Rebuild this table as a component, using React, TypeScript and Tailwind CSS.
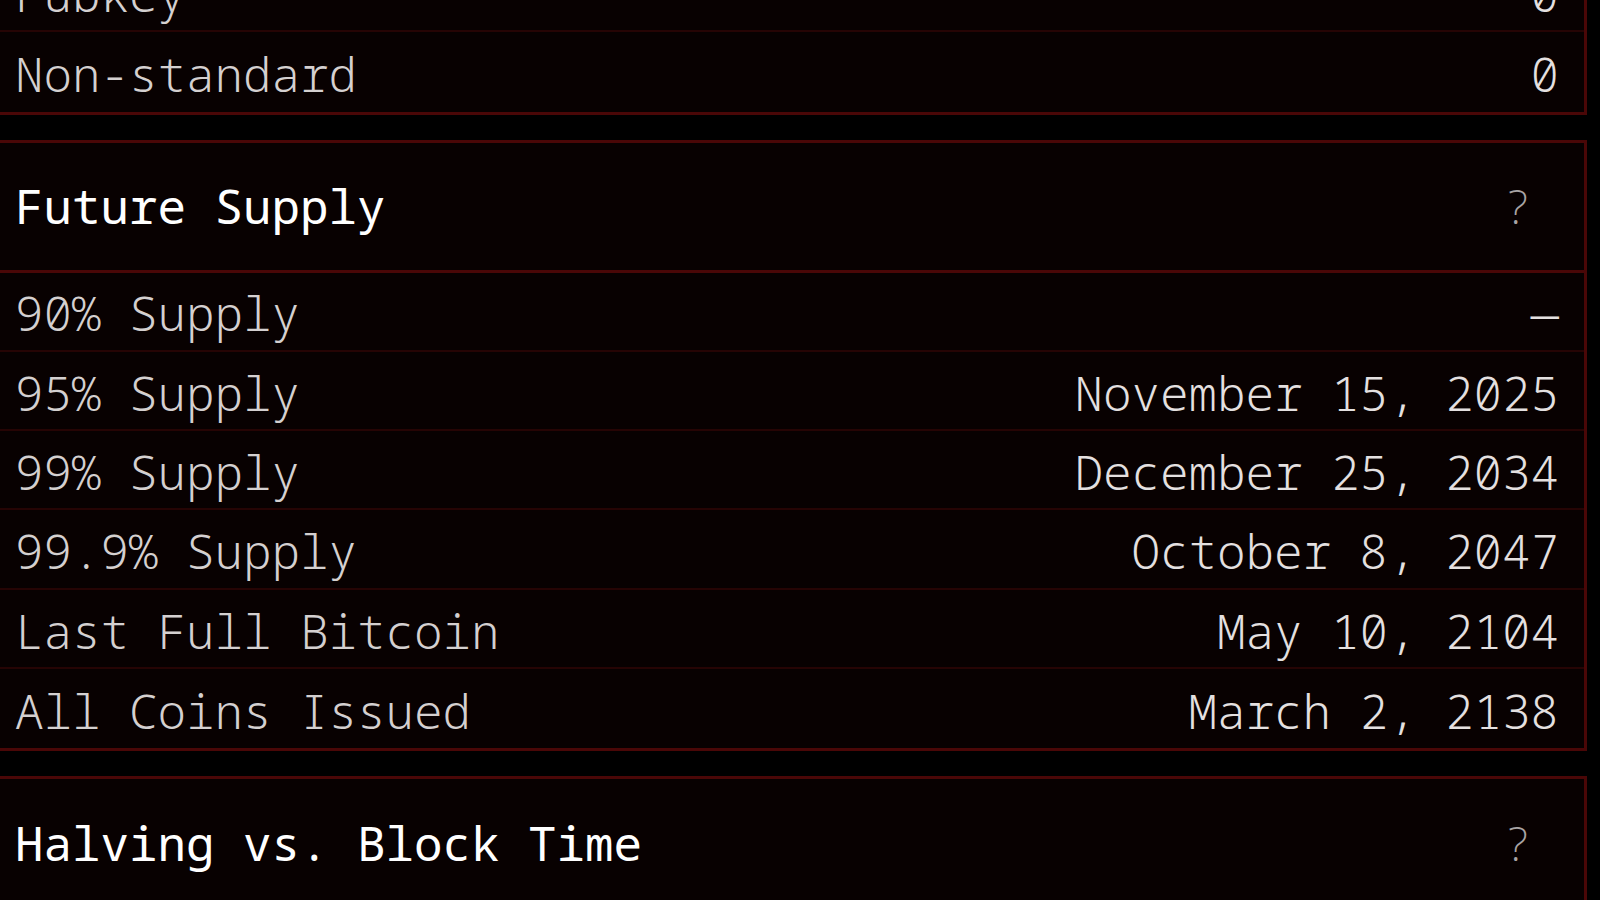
type Row = { label: string; value: string };

const outputRows: Row[] = [
  { label: "Pubkey", value: "0" },
  { label: "Non-standard", value: "0" },
];

const futureRows: Row[] = [
  { label: "90% Supply", value: "—" },
  { label: "95% Supply", value: "November 15, 2025" },
  { label: "99% Supply", value: "December 25, 2034" },
  { label: "99.9% Supply", value: "October 8, 2047" },
  { label: "Last Full Bitcoin", value: "May 10, 2104" },
  { label: "All Coins Issued", value: "March 2, 2138" },
];

const StatRow = ({ row, last }: { row: Row; last?: boolean }) => (
  <div
    className={
      "flex h-[79.3px] items-center justify-between pt-[4px] pl-[15px] pr-[25px] font-light text-[#d4d0d0] " +
      (last ? "" : "border-b-2 border-[#260404]")
    }
  >
    <span>{row.label}</span>
    <span className="text-[#e4e0e0]">{row.value}</span>
  </div>
);

const CardHeader = ({ title }: { title: string }) => (
  <div className="flex h-[130px] items-center justify-between border-b-[3px] border-[#4a0707] pl-[15px] pr-[52px]">
    <h2 className="font-normal text-white">{title}</h2>
    <button className="font-extralight text-[#a8a4a4]">?</button>
  </div>
);

const Card = ({ children, className = "" }: { children: React.ReactNode; className?: string }) => (
  <section className={"border-y-[3px] border-r-[3px] border-[#4a0707] bg-[#080101] " + className}>
    {children}
  </section>
);

export default function App() {
  return (
    <div
      className="h-screen overflow-hidden bg-black pr-[13px] text-[47.5px] leading-none"
      style={{ fontFamily: "'Noto Sans Mono', 'DejaVu Sans Mono', monospace" }}
    >
      {/* page is scrolled: the output-types card starts above the fold */}
      <div className="-mt-[50px] flex flex-col gap-[25px]">
        <Card>
          {outputRows.map((r, i) => (
            <StatRow key={r.label} row={r} last={i === outputRows.length - 1} />
          ))}
        </Card>

        <Card>
          <CardHeader title="Future Supply" />
          {futureRows.map((r, i) => (
            <StatRow key={r.label} row={r} last={i === futureRows.length - 1} />
          ))}
        </Card>

        <Card>
          <CardHeader title="Halving vs. Block Time" />
          <div className="h-[200px]" />
        </Card>
      </div>
    </div>
  );
}
